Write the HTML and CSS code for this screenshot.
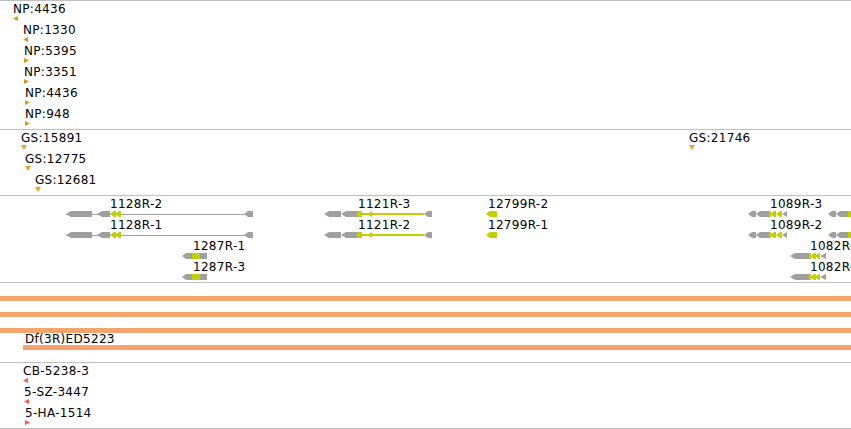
FILE: index.html
```html
<!DOCTYPE html>
<html lang="en">
<head>
    <meta charset="UTF-8">
    <title>Genome tracks</title>
    <link rel="stylesheet" href="styles.css">
</head>
<body>
    <div class="tracks">
        <!-- NP -->
        <div class="track track-np">
            <div class="feat np" style="left:13px; top:2px;"><span class="lbl">NP:4436</span><svg class="tri" width="5" height="5"><polygon points="0,2.5 5,0 5,5"/></svg></div>
            <div class="feat np" style="left:23px; top:23px;"><span class="lbl">NP:1330</span><svg class="tri" width="5" height="5"><polygon points="0,2.5 5,0 5,5"/></svg></div>
            <div class="feat np" style="left:24px; top:44px;"><span class="lbl">NP:5395</span><svg class="tri" width="5" height="5"><polygon points="0,0 5,2.5 0,5"/></svg></div>
            <div class="feat np" style="left:24px; top:65px;"><span class="lbl">NP:3351</span><svg class="tri" width="5" height="5"><polygon points="0,0 5,2.5 0,5"/></svg></div>
            <div class="feat np" style="left:25px; top:86px;"><span class="lbl">NP:4436</span><svg class="tri" width="5" height="5"><polygon points="0,0 5,2.5 0,5"/></svg></div>
            <div class="feat np" style="left:25px; top:107px;"><span class="lbl">NP:948</span><svg class="tri" width="5" height="5"><polygon points="0,0 5,2.5 0,5"/></svg></div>
        </div>

        <!-- GS -->
        <div class="track track-gs">
            <div class="feat gs" style="left:21px; top:2px;"><span class="lbl">GS:15891</span><svg class="tri" width="6" height="5"><polygon points="0,0 6,0 3,5"/></svg></div>
            <div class="feat gs" style="left:25px; top:23px;"><span class="lbl">GS:12775</span><svg class="tri" width="6" height="5"><polygon points="0,0 6,0 3,5"/></svg></div>
            <div class="feat gs" style="left:35px; top:44px;"><span class="lbl">GS:12681</span><svg class="tri" width="6" height="5"><polygon points="0,0 6,0 3,5"/></svg></div>
            <div class="feat gs" style="left:689px; top:2px;"><span class="lbl">GS:21746</span><svg class="tri" width="6" height="5"><polygon points="0,0 6,0 3,5"/></svg></div>
        </div>

        <!-- transcripts -->
        <div class="track track-genes">
            <svg class="gene-canvas" width="851" height="86" viewBox="0 0 851 86">
                <g id="row-a">
                    <!-- 1128R-2 -->
                    <line class="intron" x1="66" y1="18.5" x2="250" y2="18.5"/>
                    <polygon class="exon" points="66,18 71,15 92,15 92,21 71,21"/>
                    <polygon class="exon" points="97,18 102,15 110,15 110,21 102,21"/>
                    <polygon class="cds" points="110,18 114,15 116,15 116,21 114,21"/>
                    <polygon class="cds" points="115,18 119,15 121,15 121,21 119,21"/>
                    <polygon class="exon" points="244,18 248,15 253,15 253,21 248,21"/>

                    <!-- 1121R-3 -->
                    <polygon class="exon" points="324,18 329,15 341,15 341,21 329,21"/>
                    <polygon class="exon" points="341,18 346,15 357,15 357,21 346,21"/>
                    <rect class="cds" x="357" y="15" width="5" height="6"/>
                    <line class="cds-line" x1="362" y1="18" x2="424" y2="18"/>
                    <polygon class="cds" points="367,18 372,15 372,21"/>
                    <polygon class="exon" points="424,18 428,15 432,15 432,21 428,21"/>

                    <!-- 12799R-2 -->
                    <polygon class="cds" points="486,18 490,15 497,15 497,21 490,21"/>

                    <!-- 1089R-3 -->
                    <polygon class="exon" points="748,18 752,15 756,15 756,21 752,21"/>
                    <polygon class="exon" points="756,18 760,15 769,15 769,21 760,21"/>
                    <rect class="cds" x="769" y="15" width="2" height="6"/>
                    <polygon class="cds" points="770,18 774,15 776,15 776,21 774,21"/>
                    <polygon class="cds" points="776,18 780,15 782,15 782,21 780,21"/>
                    <polygon class="exon" points="782,18 787,15 787,21"/>

                    <polygon class="exon" points="828,18 832,15 836,15 836,21 832,21"/>
                    <polygon class="exon" points="836,18 840,15 848,15 848,21 840,21"/>
                    <rect class="cds" x="848" y="15" width="3" height="6"/>
                </g>
                <use href="#row-a" y="21"/>

                <g id="row-c">
                    <!-- 1287R-1 -->
                    <polygon class="exon" points="182,60 186,57 192,57 192,63 186,63"/>
                    <rect class="cds" x="192" y="57" width="8" height="6"/>
                    <rect class="exon" x="200" y="57" width="7" height="6"/>

                    <!-- 1082R-1 -->
                    <polygon class="exon" points="790,60 795,57 809,57 809,63 795,63"/>
                    <rect class="cds" x="809" y="57" width="2" height="6"/>
                    <polygon class="cds" points="810,60 814,57 816,57 816,63 814,63"/>
                    <polygon class="cds" points="815,60 819,57 820,57 820,63 819,63"/>
                    <polygon class="exon" points="820,60 826,57 826,63"/>
                </g>
                <use href="#row-c" y="21"/>
            </svg>

            <span class="glbl" style="left:110px; top:2px;">1128R-2</span>
            <span class="glbl" style="left:110px; top:23px;">1128R-1</span>
            <span class="glbl" style="left:193px; top:44px;">1287R-1</span>
            <span class="glbl" style="left:193px; top:65px;">1287R-3</span>
            <span class="glbl" style="left:358px; top:2px;">1121R-3</span>
            <span class="glbl" style="left:358px; top:23px;">1121R-2</span>
            <span class="glbl" style="left:488px; top:2px;">12799R-2</span>
            <span class="glbl" style="left:488px; top:23px;">12799R-1</span>
            <span class="glbl" style="left:770px; top:2px;">1089R-3</span>
            <span class="glbl" style="left:770px; top:23px;">1089R-2</span>
            <span class="glbl" style="left:810px; top:44px;">1082R-1</span>
            <span class="glbl" style="left:810px; top:65px;">1082R-2</span>
        </div>

        <!-- deficiencies -->
        <div class="track track-df">
            <div class="bar"></div>
            <div class="bar"></div>
            <div class="bar"></div>
            <div class="df-item">
                <span class="df-lbl">Df(3R)ED5223</span>
                <div class="bar"></div>
            </div>
        </div>

        <!-- insertions -->
        <div class="track track-ins">
            <div class="feat ins" style="left:23px; top:2px;"><span class="lbl">CB-5238-3</span><svg class="tri" width="5" height="5"><polygon points="0,2.5 5,0 5,5"/></svg></div>
            <div class="feat ins" style="left:24px; top:23px;"><span class="lbl">5-SZ-3447</span><svg class="tri" width="5" height="5"><polygon points="0,2.5 5,0 5,5"/></svg></div>
            <div class="feat ins" style="left:25px; top:44px;"><span class="lbl">5-HA-1514</span><svg class="tri" width="5" height="5"><polygon points="0,0 5,2.5 0,5"/></svg></div>
        </div>
    </div>
</body>
</html>
```

FILE: styles.css
```css
* {
    margin: 0;
    padding: 0;
    box-sizing: border-box;
}

body {
    font-family: 'DejaVu Sans', 'Liberation Sans', sans-serif;
    font-size: 12px;
    color: #000;
    background: #fff;
    width: 851px;
    height: 429px;
    overflow: hidden;
}

.tracks {
    display: flex;
    flex-direction: column;
    border-bottom: 1px solid #c0c0c0;
}

.track {
    position: relative;
    border-top: 1px solid #c0c0c0;
    overflow: hidden;
}

.track-np {
    height: 129px;
}

.track-gs {
    height: 66px;
}

.track-genes {
    height: 87px;
}

.track-df {
    height: 80px;
    padding-top: 13px;
}

.track-ins {
    height: 66px;
}

/* point features: label with a small arrow below */
.feat {
    position: absolute;
    display: flex;
    flex-direction: column;
    align-items: flex-start;
}

.lbl,
.glbl {
    display: block;
    line-height: 12px;
    white-space: nowrap;
    letter-spacing: 0.3px;
    color: #000;
}

.glbl {
    position: absolute;
}

.tri {
    display: block;
    margin-top: 1px;
    fill: currentColor;
}

.np {
    color: #d39a1d;
}

.gs {
    color: #eda32b;
}

.ins {
    color: #f2613f;
}

/* transcripts */
.gene-canvas {
    position: absolute;
    left: 0;
    top: 0;
}

.exon {
    fill: #a0a0a0;
}

.intron {
    stroke: #a0a0a0;
    stroke-width: 1;
}

.cds {
    fill: #c2cf00;
}

.cds-line {
    stroke: #c2cf00;
    stroke-width: 2;
}

/* deficiencies */
.bar {
    height: 5px;
    background: #f4a46c;
    margin-bottom: 11px;
}

.df-item .bar {
    margin-left: 23px;
}

.df-lbl {
    display: block;
    margin-top: -10px;
    margin-left: 25px;
    line-height: 11px;
    letter-spacing: 0.3px;
}
```
